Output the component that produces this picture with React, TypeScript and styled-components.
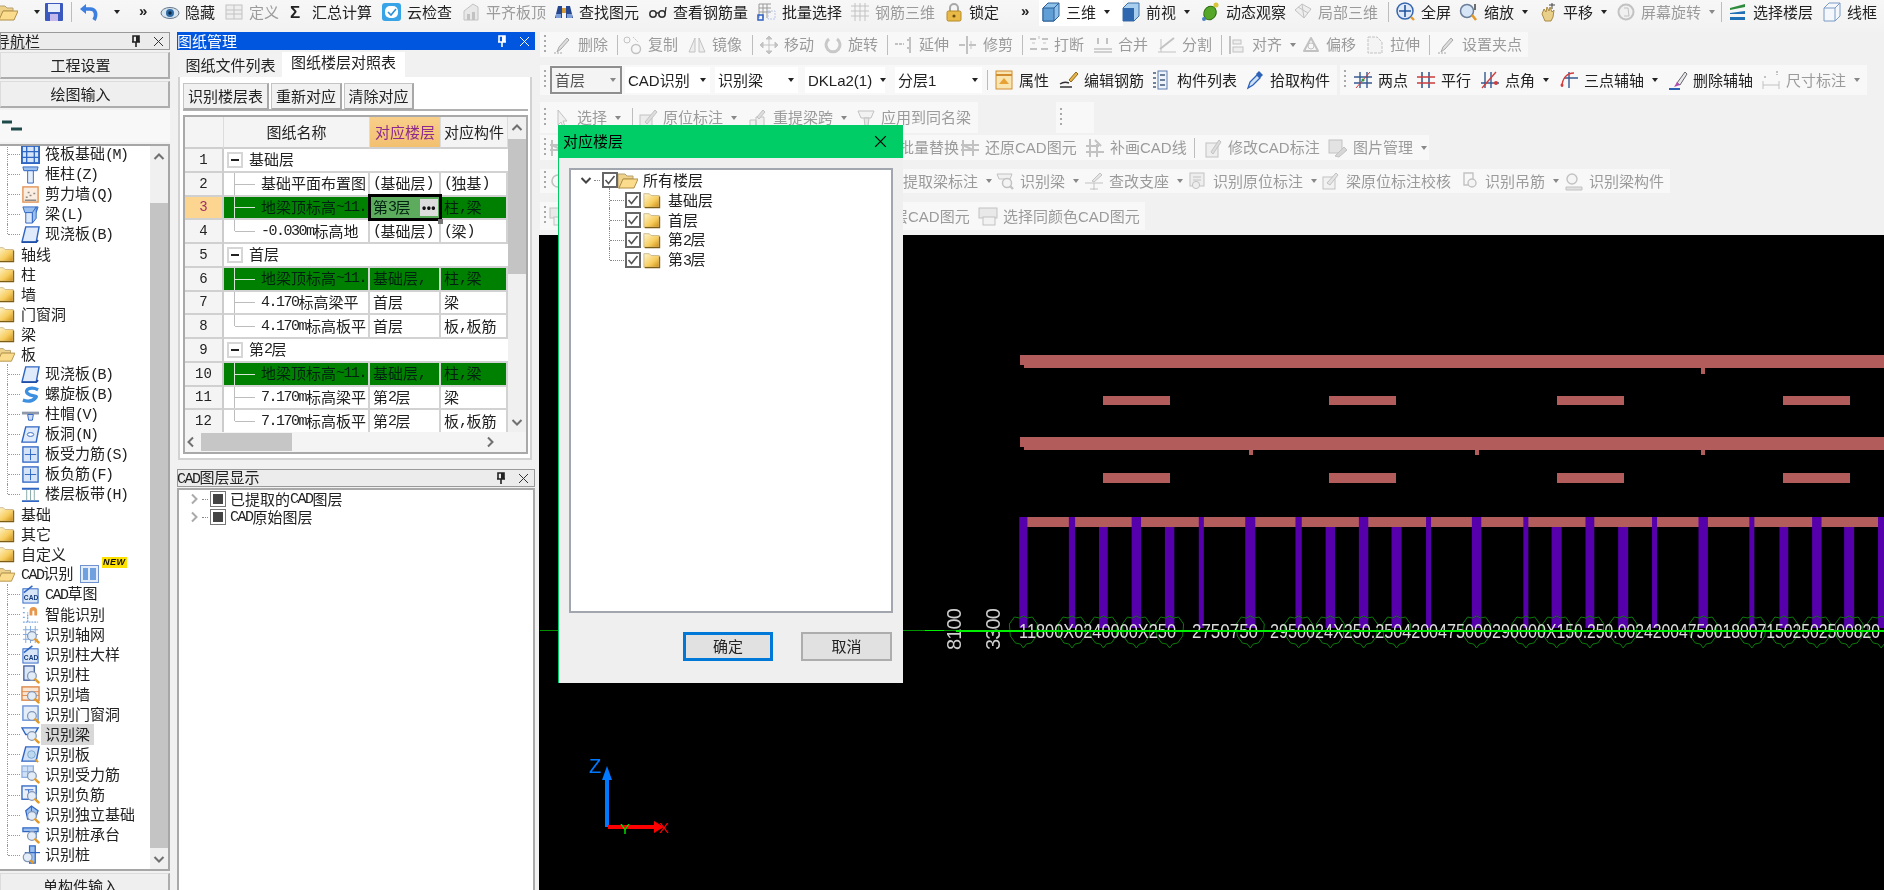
import React from "react";
import styled, { createGlobalStyle } from "styled-components";

const Global = createGlobalStyle`
  html, body { margin: 0; padding: 0; width: 1884px; height: 890px; overflow: hidden; background: #f1f1f1; }
  #root { width: 1884px; height: 890px; }
  * { box-sizing: border-box; }
`;

const CJK = `"Liberation Sans", "Noto Sans CJK SC", sans-serif`;

const Page = styled.div`
  position: relative; width: 1884px; height: 890px; overflow: hidden;
  display: flex; flex-direction: column; background: #f1f1f1;
  font-family: ${CJK}; font-size: 15px; color: #222; line-height: 1;
  filter: blur(0.35px);
`;

/* ---------- icons ---------- */
const g = "#c2c2c2", g2 = "#a8a8a8", b = "#2f66c4", b2 = "#9cc0ee", o = "#e39a26";
const Mag = () => (<><circle cx="11.5" cy="11.5" r="4.6" fill="#e3edf8" stroke="#8497b4" strokeWidth="1.3" /><path d="M15 15l3.4 3.4" stroke={o} strokeWidth="2.6" strokeLinecap="round" /></>);
const grayPen = <><path d="M4 17l2-5 8-9 2 2-8 9z" fill="#ddd" stroke={g2} /><path d="M1 18h8" stroke={g} strokeWidth="1.5" strokeDasharray="2 1" /></>;

const ICONS: Record<string, React.ReactNode> = {
  folderOpen: <><path d="M0 4h7l2 2h6v3H5l-3 9H0z" fill="#efd28a" stroke="#b7a070" /><path d="M5 9h15l-4 9H1z" fill="#fbdc8c" stroke="#b08f45" /></>,
  folder: <><defs><linearGradient id="fg" x1="0" y1="0" x2="1" y2="1"><stop offset="0" stopColor="#fff6cf" /><stop offset="0.6" stopColor="#f7cc5c" /><stop offset="1" stopColor="#c98a12" /></linearGradient></defs><path d="M1 3h6l2 2h9v13H1z" fill="url(#fg)" stroke="#c9b88e" /><path d="M18.5 6v12.5H2" fill="none" stroke="#7c5c12" strokeWidth="1.2" /></>,
  save: <><rect x="1" y="1" width="18" height="18" rx="1" fill="#3b58bf" /><rect x="4" y="2" width="12" height="8" fill="#e9eefb" /><rect x="6" y="12" width="8" height="7" fill="#c4b7ec" /></>,
  undo: <><path d="M15 18c3-5 2-11-4-11H4" fill="none" stroke="#3d7fe0" strokeWidth="3.6" /><path d="M1 7l6-5v10z" fill="#3d7fe0" /></>,
  eye: <><ellipse cx="10" cy="11" rx="9" ry="5.5" fill="#d7e3ee" stroke="#66788c" /><circle cx="10" cy="11" r="4" fill="#2e6ca8" /><circle cx="10" cy="11" r="1.7" fill="#10283f" /></>,
  table: <><rect x="2" y="3" width="16" height="14" fill="#eee" stroke={g} /><path d="M2 8h16M2 12h16M10 3v14" stroke={g} /></>,
  sigma: <text x="3" y="16" fontSize="17" fontWeight="700" fontFamily="Liberation Sans" fill="#222">Σ</text>,
  cloud: <><rect x="0" y="1" width="19" height="18" rx="3" fill="#38a3e6" /><rect x="3" y="4" width="13" height="12" rx="5" fill="#fff" /><path d="M6 10l3 3 5-6" fill="none" stroke="#2b8fd8" strokeWidth="1.6" /></>,
  plate: <><path d="M3 18V9l9-7 5 3v13z" fill="#e8e8e8" stroke={g} /><path d="M6 12h3v6H6zM11 10h3v8h-3z" fill={g} /></>,
  binoculars: <><path d="M1 16l3-12h4v12zM19 16l-3-12h-4v12z" fill="#25478f" /><rect x="8" y="6" width="4" height="5" fill="#d49a3a" /><rect x="2" y="12" width="5" height="4" fill="#7c9ed8" /><rect x="13" y="12" width="5" height="4" fill="#7c9ed8" /></>,
  glasses: <><circle cx="5" cy="12" r="3.2" fill="none" stroke="#333" strokeWidth="1.5" /><circle cx="14" cy="12" r="3.2" fill="none" stroke="#333" strokeWidth="1.5" /><path d="M8 11h3M17 12l1-7" stroke="#333" strokeWidth="1.3" /></>,
  batch: <><path d="M2 2h12M2 6h12M2 10h12M2 2v14M6 2v14M10 2v14" stroke="#999" fill="none" /><rect x="1" y="13" width="5" height="5" fill="none" stroke="#2f5fc4" strokeWidth="1.5" /><rect x="11" y="9" width="7" height="8" fill="none" stroke="#b9c6e8" strokeDasharray="2 1" /></>,
  rebar3d: <path d="M1 4h18M1 9h18M1 14h18M5 1v18M10 1v18M15 1v18" stroke={g} fill="none" />,
  lock: <><path d="M6 9V6a4 4 0 0 1 8 0v3" fill="none" stroke="#a8a8a8" strokeWidth="2" /><rect x="3" y="9" width="14" height="10" rx="1.5" fill="#e9b948" stroke="#b58a26" /><circle cx="10" cy="14" r="1.6" fill="#6b4f10" /></>,
  cube: <><path d="M2 6l5-5h11v13l-5 5H2z" fill="#8ec1ea" stroke="#2b5f96" /><path d="M2 6h11v13H2z" fill="#5f9fd6" stroke="#2b5f96" /><path d="M13 6l5-5" fill="none" stroke="#2b5f96" /></>,
  cube2: <><path d="M2 6l5-5h11v13l-5 5H2z" fill="#a9cfee" stroke="#3d6ea6" /><path d="M2 6h11v13H2z" fill="#2f67ae" /></>,
  orbit: <><ellipse cx="9" cy="11" rx="6" ry="7" transform="rotate(30 9 11)" fill="#55a827" stroke="#2e6d12" /><circle cx="15" cy="3" r="2.5" fill="#d8c436" /><circle cx="3" cy="17" r="2" fill="#4a7fc4" /></>,
  local3d: <><path d="M2 8l7-6 9 5-7 9z" fill="#eee" stroke={g} /><path d="M9 2l2 14M5 5l10 6" stroke={g} /></>,
  full: <><circle cx="9" cy="9" r="8" fill="#dfe9f8" stroke="#3465ad" strokeWidth="1.5" /><path d="M9 3v12M3 9h12" stroke="#24559e" strokeWidth="1.6" /><path d="M15 15l3 3" stroke={o} strokeWidth="2.4" /></>,
  zoom: <><circle cx="8" cy="9" r="6.5" fill="#d7e6f7" stroke="#6b7f9b" strokeWidth="1.5" /><path d="M13 13l4 5" stroke={o} strokeWidth="2.6" /><path d="M16 2v6" stroke="#333" strokeWidth="1.4" /></>,
  hand: <><path d="M4 12l2-5 2 3 1-5 2 4 1-4 2 5 2-2-1 7-2 4H7z" fill="#e8cf8a" stroke="#a98a44" /><path d="M14 1v6M11 3h6" stroke="#444" /></>,
  screenRot: <><circle cx="10" cy="10" r="7.5" fill="#f0f0f0" stroke={g} strokeWidth="2" /><path d="M8 6h4l1 8H8" fill="none" stroke={g} /></>,
  floors: <><path d="M2 6l15-4v3L2 8z" fill="#2e8b3d" /><path d="M2 11l15-2v3H2z" fill="#1f6fb6" /><path d="M2 15h15v3H2z" fill="#1f6fb6" /></>,
  wire: <><path d="M2 6l5-5h11v13l-5 5H2z" fill="#f4f7fb" stroke="#7d9cc4" /><path d="M2 6h11v13M13 6l5-5" fill="none" stroke="#7d9cc4" /></>,
  brush: grayPen,
  copy: <><circle cx="4" cy="5" r="3" fill="none" stroke={g} /><circle cx="13" cy="14" r="4.5" fill="none" stroke={g} strokeWidth="1.5" /><path d="M10 2l5 5" stroke={g} strokeDasharray="2 1" /></>,
  mirror: <><path d="M8 3L2 17h6zM12 3l6 14h-6z" fill="#eee" stroke={g} /></>,
  move: <><path d="M10 1v18M1 10h18M10 1l-3 3h6zM10 19l-3-3h6zM1 10l3-3v6zM19 10l-3-3v6z" stroke={g} fill={g} /></>,
  rotate: <path d="M6 4a7 7 0 1 0 8 0" fill="none" stroke="#c8c8c8" strokeWidth="3" />,
  extend: <><path d="M1 9h9" stroke={g} strokeWidth="2" strokeDasharray="3 1" /><path d="M16 2v16M13 5h3M13 13h3" stroke={g} strokeWidth="2" /></>,
  trim: <><path d="M9 1v18M1 10h6M11 10h7" stroke={g} strokeWidth="2" /><path d="M13 6v8" stroke={g} /></>,
  break: <><path d="M1 4h6M13 4h6M1 14h7M12 14h7" stroke={g} strokeWidth="2" /><path d="M3 8h3M14 8h3M10 1v3" stroke={g} /></>,
  merge: <><path d="M1 14h18M1 17h18" stroke={g} strokeWidth="1.6" /><path d="M5 3v6M14 3v6" stroke={g} strokeWidth="2" /></>,
  split: <><path d="M1 17h18M4 4v13" stroke={g} /><path d="M3 14L17 3" stroke={g} strokeWidth="2" /></>,
  align: <><path d="M3 1v18" stroke={g} strokeWidth="2" /><rect x="6" y="5" width="8" height="4" fill="#eee" stroke={g} /><rect x="6" y="12" width="10" height="5" fill="#eee" stroke={g} /></>,
  offset: <><path d="M3 16l7-13 7 13z" fill="none" stroke={g} strokeWidth="2" strokeLinejoin="round" /><circle cx="10" cy="11" r="3" fill="none" stroke={g} /></>,
  stretch: <path d="M3 2h9l5 5v11H3z" fill="#f4f4f4" stroke={g} strokeDasharray="3 1" />,
  props: <><rect x="2" y="1" width="16" height="18" fill="#f9e5b0" stroke="#d08c2e" /><path d="M2 5h16" stroke="#d08c2e" strokeWidth="2" /><path d="M5 14l5-6 5 6z" fill="#e8a234" /></>,
  pen: <><path d="M10 10l7-8 2 2-7 8z" fill="#e8b447" stroke="#8a6b20" /><path d="M1 14c3-2 6-2 9-1M1 17h12" stroke="#333" strokeWidth="1.5" fill="none" /></>,
  list: <><rect x="6" y="1" width="9" height="18" fill="#eef3fb" stroke="#5a7bb0" /><path d="M1 3h3M1 8h3M1 13h3M1 17h3M8 5h5M8 10h5M8 15h5" stroke="#44597c" strokeWidth="1.6" /></>,
  picker: <><path d="M3 18l2-6 7-7 3 3-7 7z" fill="#cfe2f8" stroke="#2d62b8" strokeWidth="1.3" /><path d="M11 4l3-3 4 4-3 3z" fill="#2d62b8" /></>,
  twopts: <><path d="M7 2v16M14 2v16M1 7h18M1 13h18" stroke="#35598f" strokeWidth="1.4" /><path d="M3 18L17 2" stroke="#d43b3b" /><circle cx="10" cy="10" r="1.6" fill="#3a9a3a" /></>,
  parallel: <><path d="M6 2v16M13 2v16" stroke="#35598f" strokeWidth="1.6" /><path d="M1 7h18M1 13h18" stroke="#c93d3d" strokeWidth="1.6" /></>,
  angle: <><path d="M5 2v16M11 2v16M1 13h18" stroke="#35598f" strokeWidth="1.4" /><path d="M2 18L16 2" stroke="#d43b3b" strokeWidth="1.4" /><circle cx="16" cy="13" r="2" fill="#d43b3b" /></>,
  arc: <><path d="M10 2v16M5 8h14" stroke="#35598f" strokeWidth="1.4" /><path d="M3 17C3 8 8 3 15 3" stroke="#d43b3b" fill="none" strokeWidth="1.4" /><circle cx="3" cy="15" r="1.5" fill="#d43b3b" /></>,
  delaxis: <><path d="M9 13l8-11 2 2-7 11z" fill="#e8e8f0" stroke="#666" /><path d="M6 17l3-5 3 3z" fill="#b34fb0" /><path d="M1 19h11" stroke="#2c60b0" strokeWidth="2" /></>,
  dimension: <><path d="M2 11v8M18 11v8M2 15h16" stroke={g} /><path d="M16 1v4M3 7h2" stroke={g} strokeWidth="2" strokeDasharray="2 1" /></>,
  arrow: <path d="M6 2v15l3-3 2 5 2-1-2-5h4z" fill="#f0f0f0" stroke={g} />,
  annot: <><rect x="2" y="7" width="12" height="12" fill="#ececec" stroke={g} /><path d="M7 14L17 2l2 2L9 16z" fill="#ddd" stroke={g} /></>,
  respan: <><path d="M2 18v-6h6v6zM8 18V9h8v9z" fill="#f0f0f0" stroke={g} /><path d="M9 9l6-7 2 2-6 7z" fill="#ddd" stroke={g} /></>,
  apply: <><path d="M2 3h16l-3 7H5z" fill="#f2f2f2" stroke={g} /><path d="M8 10h5l-1 8H9z" fill="#e6e6e6" stroke={g} /></>,
  restore: <path d="M3 2v16M13 2v16M1 7h18M1 12h18M3 7l10 5" stroke={g} strokeWidth="2" fill="none" />,
  draw: <path d="M5 1v18M12 6v13M1 8h13M1 14h18M10 2l6 6" stroke={g} strokeWidth="2" fill="none" />,
  modify: <><rect x="3" y="5" width="12" height="14" fill="#eee" stroke={g} /><path d="M8 14L16 2l2 2-8 12z" fill="#ddd" stroke={g} /></>,
  image: <><rect x="1" y="2" width="13" height="13" fill="#e3e3e3" stroke={g} /><path d="M7 18l9-9 3 3-8 7z" fill="#d6d6d6" stroke={g} /></>,
  idBeam: <><path d="M2 3h15l-2 5H4z" fill="#f0f0f0" stroke={g} /><circle cx="12" cy="12" r="4.5" fill="#f4f4f4" stroke={g} strokeWidth="1.5" /><path d="M15 15l3 3" stroke={g} strokeWidth="2.4" /></>,
  support: <><path d="M1 12h18M10 12v7M6 18h8" stroke={g} /><path d="M8 10L16 2l2 2-8 7z" fill="#e6e6e6" stroke={g} /></>,
  idAnnot: <><rect x="2" y="2" width="14" height="13" fill="#eee" stroke={g} /><path d="M5 6h8M5 9h8" stroke={g} /><circle cx="8" cy="14" r="3.6" fill="#eee" stroke={g} /></>,
  check: <><rect x="2" y="6" width="12" height="12" fill="#f2f2f2" stroke={g} /><path d="M6 12L15 2l2 2-8 10z" fill="#e4e4e4" stroke={g} /></>,
  stirrup: <><path d="M4 2h9v12H4z" fill="none" stroke={g} strokeWidth="1.4" /><circle cx="12" cy="12" r="4" fill="#f4f4f4" stroke={g} strokeWidth="1.4" /></>,
  member: <><path d="M2 16h16v3H2z" fill="#e0e0e0" stroke={g} /><circle cx="8" cy="8" r="5" fill="#f5f5f5" stroke={g} strokeWidth="1.4" /></>,
  colorCad: <><rect x="1" y="2" width="18" height="10" fill="#e9e9e9" stroke={g} /><rect x="5" y="11" width="12" height="8" fill="#f2f2f2" stroke={g} /></>,
  round: <circle cx="9" cy="10" r="6" fill="none" stroke={g} strokeWidth="1.6" />,
  raft: <><rect x="1" y="1" width="18" height="18" fill="#d5e4f7" stroke={b} strokeWidth="2" /><path d="M1 7h18M1 13h18M6 1v18M14 1v18" stroke={b} strokeWidth="1.4" /></>,
  column: <><path d="M2 2h16l-1 4H3z" fill={b2} stroke={b} /><path d="M7 6h6v13H7z" fill="#e5eefb" stroke={b} /></>,
  shear: <><rect x="2" y="2" width="16" height="16" fill="#fbeee0" stroke="#e09050" strokeWidth="1.4" /><path d="M4 16h12M5 13h2M9 11h2M13 9h2M7 8h2" stroke="#8a8a8a" strokeWidth="1.6" /></>,
  beam: <><path d="M2 2h16l-2 6H4z" fill={b2} stroke={b} /><path d="M5 8h7v11H5z" fill="#dbe8f9" stroke={b} /><path d="M12 8l4-6v12l-4 5z" fill={b2} stroke={b} /></>,
  slab: <><path d="M5 2h14l-3 16H1z" fill="#dfeafa" stroke={b} strokeWidth="1.5" /><path d="M1 18h15l2-2" fill="none" stroke="#1e4da8" strokeWidth="2" /></>,
  spiral: <path d="M18 5C10 1 3 5 7 9s12 1 8 5-10 3-13 2" fill="none" stroke="#3d8fe0" strokeWidth="3.5" />,
  cap: <><path d="M1 7h18v3H1z" fill="#8d99ab" /><path d="M7 10h6l-1 6H8z" fill="#cfdcf0" stroke={b} /></>,
  hole: <><path d="M5 2h14l-3 16H1z" fill="#dfeafa" stroke={b} strokeWidth="1.5" /><ellipse cx="10" cy="10" rx="3.4" ry="2" fill="#fff" stroke={b} /></>,
  gridSlab: <><rect x="2" y="2" width="16" height="16" fill="#d5e4f7" stroke={b} strokeWidth="1.4" /><path d="M4 10h12M10 4v12" stroke={b} /></>,
  band: <><path d="M1 4h18M1 17h18" stroke={b} strokeWidth="2" /><path d="M6 5v11M14 5v11M10 5v11" stroke="#8aa" /></>,
  cadSketch: <><rect x="2" y="4" width="16" height="15" fill="#d8e6f8" stroke={b} /><path d="M3 8L12 1" stroke={b} strokeWidth="1.6" /><text x="3" y="16" fontSize="7" fontWeight="700" fontFamily="Liberation Sans" fill="#123a7a">CAD</text></>,
  smart: <><path d="M2 3h3M2 8h3M2 13h3M2 18h16M7 18V8" stroke="#7aa8e0" strokeWidth="1.4" strokeDasharray="2 1" /><path d="M9 11V6a4 4 0 0 1 8 0v5h-3V6h-2v5z" fill="#e8964a" /></>,
  idGrid: <><path d="M2 5h16M2 10h16M2 15h16M5 1v18M10 1v18M15 1v18" stroke="#7ea6de" /><Mag /></>,
  idColumn: <><rect x="3" y="1" width="11" height="15" fill="#dbe6f7" stroke="#44609f" strokeWidth="1.4" /><Mag /></>,
  idWall: <><rect x="1" y="2" width="18" height="14" fill="#fbe6d3" stroke="#dc8a4e" strokeWidth="1.5" /><path d="M1 7h18M1 11h18" stroke="#dc8a4e" /><Mag /></>,
  idDoor: <><rect x="2" y="1" width="16" height="15" fill="#e4eefb" stroke="#6d95d6" strokeWidth="1.5" /><Mag /></>,
  idBeamB: <><path d="M1 3h17l-4 7H5z" fill="#e4eefb" stroke={b} strokeWidth="1.5" /><Mag /></>,
  idSlab: <><path d="M5 2h14l-3 15H1z" fill="#cfe0f7" stroke={b} strokeWidth="1.5" /><circle cx="11" cy="10" r="4" fill="#bcd9f0" stroke="#7da6cc" /><path d="M15 15l3 3" stroke={o} strokeWidth="2" /></>,
  idRebar: <><rect x="1" y="1" width="12" height="12" fill="#cfe0f7" stroke="#8fb0df" strokeWidth="1.4" /><path d="M7 1v12M1 7h12" stroke="#8fb0df" /><Mag /></>,
  idNeg: <><rect x="1" y="1" width="15" height="14" fill="#eaf1fb" stroke={b} strokeWidth="1.4" /><path d="M4 5h9M8 5v8" stroke={b} /><Mag /></>,
  idFound: <><path d="M5 6l6-5 7 5-3 9H7z" fill={b2} stroke={b} strokeWidth="1.3" /><path d="M11 1v14" stroke={b} /><Mag /></>,
  idPile: <><path d="M2 3h16v4H2z" fill={b2} stroke={b} strokeWidth="1.3" /><path d="M12 7h4v7h-4z" fill="#dbe8f9" stroke={b} /><Mag /></>,
  idPile2: <><path d="M9 1h6v18H9z" fill={b2} stroke={b} strokeWidth="1.3" /><path d="M4 8h16" stroke={b} strokeWidth="1.3" /><circle cx="7" cy="13" r="4.6" fill="#e3edf8" stroke="#8497b4" strokeWidth="1.3" /><path d="M10 16l3 3" stroke={o} strokeWidth="2.6" /></>,
  idCad: <><rect x="2" y="4" width="16" height="15" fill="#d8e6f8" stroke={b} /><path d="M3 8L12 1" stroke={b} strokeWidth="1.6" /><text x="3" y="16" fontSize="7" fontWeight="700" fontFamily="Liberation Sans" fill="#123a7a">CAD</text></>,
};

const IconSvg = styled.svg`flex: none; display: block;`;
const Icon = ({ k, s = 20 }: { k: string; s?: number }) => (
  <IconSvg viewBox="0 0 20 20" width={s} height={s}>{ICONS[k]}</IconSvg>
);

const Mono = styled.span`font-family: "Liberation Mono", monospace; font-size: 1em; letter-spacing: -0.1em;`;
const L = ({ children }: { children: string }) => (
  <>{children.split(/([\x21-\x7e]+)/).map((p, i) => (i % 2 ? <Mono key={i}>{p}</Mono> : p))}</>
);

/* ---------- toolbars ---------- */
const TopBar = styled.div`
  display: flex; align-items: flex-start; height: 32px; flex: none; margin-left: -2px; width: 1886px;
  background: linear-gradient(#f7f7f7, #f2f2f2);
`;
const ToolItem = styled.div<{ $w: number; $dim?: boolean; $active?: boolean }>`
  display: flex; align-items: center; height: 24px; flex: none; width: ${(p) => p.$w}px;
  white-space: nowrap; color: ${(p) => (p.$dim ? "#9b9b9b" : "#222")};
  ${(p) => p.$active && "background:#fff; outline: 2px solid #fff;"}
  & > span.t { margin-left: 5px; }
`;
const Caret = styled.i<{ $dim?: boolean }>`
  margin-left: 8px; width: 0; height: 0; flex: none;
  border-left: 3.5px solid transparent; border-right: 3.5px solid transparent;
  border-top: 4px solid ${(p) => (p.$dim ? "#888" : "#222")};
`;
const Sep = styled.div<{ $w: number }>`
  flex: none; height: 24px; width: ${(p) => p.$w}px; display: flex; align-items: center;
  &::before { content: ""; width: 1px; height: 20px; background: #bdbdbd; }
`;
const Sp = styled.div<{ $w: number; $h?: number }>`flex: none; width: ${(p) => p.$w}px; ${(p) => p.$h ? `height:${p.$h}px;` : ""}`;
const More = styled.span`font-size: 15px; font-weight: 700; margin-top: -3px;`;

type T = [string, string, number, string?];
const Tools = ({ items, from, end }: { items: T[]; from: number; end: number }) => (
  <>
    <Sp $w={items[0][2] - from} />
    {items.map((it, i) => {
      const w = (items[i + 1]?.[2] ?? end) - it[2];
      const f = it[3] || "";
      if (it[0] === "|") return <Sep key={i} $w={w} />;
      if (it[0] === ">>") return <ToolItem key={i} $w={w}><More>»</More></ToolItem>;
      const dim = f.includes("d");
      return (
        <ToolItem key={i} $w={w} $dim={dim} $active={f.includes("a")}>
          {it[0] && <Icon k={it[0]} />}
          {it[1] && <span className="t">{it[1]}</span>}
          {f.includes("c") && <Caret $dim={dim} />}
        </ToolItem>
      );
    })}
  </>
);

const top: T[] = [
  ["folderOpen", "", -2], ["", "", 26, "c"], ["save", "", 44], ["|", "", 71], ["undo", "", 79], ["", "", 106, "c"], [">>", "", 139],
  ["eye", "隐藏", 160], ["table", "定义", 224, "d"], ["sigma", "汇总计算", 287], ["cloud", "云检查", 382], ["plate", "平齐板顶", 461, "d"],
  ["binoculars", "查找图元", 554], ["glasses", "查看钢筋量", 648], ["batch", "批量选择", 757], ["rebar3d", "钢筋三维", 850, "d"], ["lock", "锁定", 944],
  [">>", "", 1021], ["cube", "三维", 1041, "ac"], ["cube2", "前视", 1121, "c"], ["orbit", "动态观察", 1201], ["local3d", "局部三维", 1293, "d"],
  ["|", "", 1388], ["full", "全屏", 1396], ["zoom", "缩放", 1459, "c"], ["hand", "平移", 1538, "c"], ["screenRot", "屏幕旋转", 1616, "dc"],
  ["|", "", 1721], ["floors", "选择楼层", 1728], ["wire", "线框", 1822],
];
const r2: T[] = [
  ["brush", "删除", 553, "d"], ["|", "", 617], ["copy", "复制", 623, "d"], ["mirror", "镜像", 687, "d"], ["|", "", 752], ["move", "移动", 759, "d"], ["rotate", "旋转", 823, "d"], ["|", "", 887],
  ["extend", "延伸", 894, "d"], ["trim", "修剪", 958, "d"], ["|", "", 1022], ["break", "打断", 1029, "d"], ["merge", "合并", 1093, "d"], ["split", "分割", 1157, "d"], ["|", "", 1221],
  ["align", "对齐", 1227, "dc"], ["offset", "偏移", 1301, "d"], ["stretch", "拉伸", 1365, "d"], ["|", "", 1429], ["brush", "设置夹点", 1437, "d"],
];
const r3a: T[] = [["props", "属性", 995], ["pen", "编辑钢筋", 1060], ["list", "构件列表", 1153], ["picker", "拾取构件", 1246]];
const r3b: T[] = [
  ["twopts", "两点", 1353], ["parallel", "平行", 1416], ["angle", "点角", 1480, "c"], ["arc", "三点辅轴", 1559, "c"], ["delaxis", "删除辅轴", 1668], ["dimension", "尺寸标注", 1761, "dc"],
];
const r4: T[] = [["arrow", "选择", 552, "dc"], ["|", "", 632], ["annot", "原位标注", 638, "dc"], ["respan", "重提梁跨", 748, "dc"], ["apply", "应用到同名梁", 856, "d"]];
const r5: T[] = [["restore", "", 549, "d"], ["restore", "批量替换", 874, "d"], ["restore", "还原CAD图元", 960, "d"], ["draw", "补画CAD线", 1085, "d"], ["|", "", 1194], ["modify", "修改CAD标注", 1203, "d"], ["image", "图片管理", 1328, "dc"]];
const r6: T[] = [["round", "", 549, "d"], ["member", "提取梁标注", 878, "dc"], ["idBeam", "识别梁", 995, "dc"], ["support", "查改支座", 1084, "dc"], ["idAnnot", "识别原位标注", 1188, "dc"], ["check", "梁原位标注校核", 1321, "d"], ["stirrup", "识别吊筋", 1460, "dc"], ["member", "识别梁构件", 1564, "d"]];
const r7: T[] = [["colorCad", "", 549, "d"], ["colorCad", "选择同图层CAD图元", 808, "d"], ["colorCad", "选择同颜色CAD图元", 978, "d"]];

const Workspace = styled.div`flex: 1; min-width: 0; display: flex; flex-direction: column; margin-left: 4px; height: 858px;`;
const ToolRow = styled.div<{ $h: number; $mt: number }>`
  display: flex; flex: none; height: ${(p) => p.$h}px; margin-top: ${(p) => p.$mt}px; padding-left: 1px;
`;
const Strip = styled.div<{ $w: number; $ml?: number }>`
  display: flex; align-items: center; width: ${(p) => p.$w}px; margin-left: ${(p) => p.$ml || 0}px; flex: none;
  background: #f8f8f8; overflow: hidden;
`;
const Grip = styled.i`
  flex: none; width: 2px; height: 20px; margin: 0 2px 0 4px;
  background: repeating-linear-gradient(#a9a9a9 0 2px, transparent 2px 5px);
`;
const ComboBox = styled.div<{ $w: number; $ml: number; $b?: boolean }>`
  flex: none; display: flex; align-items: center; justify-content: space-between;
  width: ${(p) => p.$w}px; margin-left: ${(p) => p.$ml}px; height: ${(p) => (p.$b ? 28 : 26)}px;
  padding: 0 3px 0 3px; background: #fff;
  ${(p) => p.$b && "border: 2px solid #8e8e8e; background:#f4f4f4; color:#555;"}
  & i { margin-right: 1px; }
`;
const Combo = ({ t, w, ml, bd }: { t: string; w: number; ml: number; bd?: boolean }) => (
  <ComboBox $w={w} $ml={ml} $b={bd}><span>{t}</span><Caret $dim={bd} /></ComboBox>
);
const VRule = styled.div`flex: none; width: 1px; height: 20px; background: #bbb; margin-left: 5px;`;

/* ---------- nav ---------- */
const Main = styled.div`display: flex; flex: 1; min-height: 0;`;
const Nav = styled.div`width: 170px; flex: none; display: flex; flex-direction: column; height: 858px;`;
const TitleBar = styled.div<{ $blue?: boolean }>`
  flex: none; height: 18px; display: flex; align-items: center; overflow: hidden; white-space: nowrap;
  background: ${(p) => (p.$blue ? "#0056df" : "#ececec")}; color: ${(p) => (p.$blue ? "#fff" : "#222")};
  ${(p) => !p.$blue && "border: 1px solid #9a9a9a;"}
`;
const TitleText = styled.span<{ $off?: number }>`flex: 1; margin-left: ${(p) => p.$off || 0}px; font-size: 15px;`;
const PinSvg = styled.svg`flex: none; margin-right: 12px;`;
const Pin = ({ c }: { c: string }) => (
  <PinSvg width="10" height="12" viewBox="0 0 10 12"><path d="M2 1h6v6H2zM1 7h8M5 7v5" fill="none" stroke={c} strokeWidth="1.6" /><path d="M5 1h3v6H5z" fill={c} /></PinSvg>
);
const CloseSvg = styled.svg`flex: none; margin-right: 5px;`;
const Close = ({ c, s = 11 }: { c: string; s?: number }) => (
  <CloseSvg width={s} height={s} viewBox="0 0 11 11"><path d="M1 1l9 9M10 1l-9 9" stroke={c} strokeWidth="1" /></CloseSvg>
);
const NavButton = styled.div<{ $mt?: number }>`
  flex: none; height: 27px; margin-top: ${(p) => p.$mt ?? 2}px; display: flex; align-items: center; justify-content: center; padding-right: 8px;
  background: #efefef; border: 1px solid #dcdcdc; border-bottom: 2px solid #adadad; border-right: 2px solid #adadad;
`;
const NavTools = styled.div`
  flex: none; height: 32px; margin-top: 2px; background: #f8f8f8; display: flex; align-items: center; padding-left: 2px;
`;
const NavTree = styled.div`
  flex: none; height: 727px; margin-top: 2px; display: flex; background: #fff;
  border: 2px solid #a6a6a6; border-left: 0; overflow: hidden;
`;
const TreeList = styled.div`flex: 1; min-width: 0; margin-top: -2px; overflow: hidden;`;
const NavRow = styled.div<{ $child?: boolean; $last?: boolean; $sel?: boolean }>`
  position: relative; height: 20.03px; display: flex; align-items: center; white-space: nowrap;
  padding-left: ${(p) => (p.$child ? 21 : 0)}px;
  ${(p) => p.$child && `
    &::before { content: ""; position: absolute; left: 7px; top: 0; height: ${p.$last ? "50%" : "100%"}; border-left: 1px dotted #999; }
    &::after { content: ""; position: absolute; left: 8px; top: 50%; width: 12px; border-top: 1px dotted #999; }
  `}
`;
const NavLabel = styled.span<{ $sel?: boolean }>`
  margin-left: 5px; ${(p) => p.$sel && "background:#d8d8d8; padding: 3px 4px 3px 4px; margin-left:1px;"}
`;
const FolderName = styled.span`margin-left: 6px;`;
const NewBadge = styled.span`
  position: absolute; left: 102px; top: -7px; padding: 1px 1px; font: italic 700 9px/9px "Liberation Sans", sans-serif;
  background: #ffe100; color: #111; letter-spacing: 0.5px;
`;
const NewIcon = styled.span`
  display: inline-flex; gap: 2px; margin-left: 6px; width: 19px; height: 18px; padding: 2px; border: 1px solid #6f93cf; background: #e4edf9;
  & > b { flex: 1; background: #6fa0e0; }
`;

const ScrollCol = styled.div`
  flex: none; width: 18px; display: flex; flex-direction: column; align-items: center; background: #f0f0f0;
`;
const ArrowBox = styled.div<{ $h: number; $end?: boolean }>`
  flex: none; height: ${(p) => p.$h}px; display: flex; justify-content: center;
  align-items: ${(p) => (p.$end ? "flex-end" : "center")}; ${(p) => p.$end && "padding-bottom: 4px;"}
`;
const Thumb = styled.div<{ $mt: number; $h: number }>`flex: none; width: 100%; margin-top: ${(p) => p.$mt}px; height: ${(p) => p.$h}px; background: #c4c4c4;`;
const ChevSvg = styled.svg`flex: none; display: block;`;
const Chev = ({ d, c = "#707070" }: { d: "u" | "d" | "l" | "r"; c?: string }) => (
  <ChevSvg width="12" height="12" viewBox="0 0 12 12" style={{ transform: `rotate(${{ d: 0, u: 180, l: 90, r: -90 }[d]}deg)` }}>
    <path d="M1.5 4l4.5 4.5L10.5 4" fill="none" stroke={c} strokeWidth="2" />
  </ChevSvg>
);

const FolderIcon = () => <Icon k="folder" s={18} />;
const NavLead = styled.div`margin-left: -3px; display: flex; flex: none;`;

type N = { f?: string; open?: boolean; i?: string; t?: string; last?: boolean; sel?: boolean; cad?: boolean };
const navRows: N[] = [
  { i: "raft", t: "筏板基础(M)" }, { i: "column", t: "框柱(Z)" }, { i: "shear", t: "剪力墙(Q)" }, { i: "beam", t: "梁(L)" }, { i: "slab", t: "现浇板(B)", last: true },
  { f: "轴线" }, { f: "柱" }, { f: "墙" }, { f: "门窗洞" }, { f: "梁" }, { f: "板", open: true },
  { i: "slab", t: "现浇板(B)" }, { i: "spiral", t: "螺旋板(B)" }, { i: "cap", t: "柱帽(V)" }, { i: "hole", t: "板洞(N)" }, { i: "gridSlab", t: "板受力筋(S)" }, { i: "gridSlab", t: "板负筋(F)" }, { i: "band", t: "楼层板带(H)", last: true },
  { f: "基础" }, { f: "其它" }, { f: "自定义" }, { f: "CAD识别", open: true, cad: true },
  { i: "cadSketch", t: "CAD草图" }, { i: "smart", t: "智能识别" }, { i: "idGrid", t: "识别轴网" }, { i: "idCad", t: "识别柱大样" }, { i: "idColumn", t: "识别柱" }, { i: "idWall", t: "识别墙" }, { i: "idDoor", t: "识别门窗洞" },
  { i: "idBeamB", t: "识别梁", sel: true }, { i: "idSlab", t: "识别板" }, { i: "idRebar", t: "识别受力筋" }, { i: "idNeg", t: "识别负筋" }, { i: "idFound", t: "识别独立基础" }, { i: "idPile", t: "识别桩承台" }, { i: "idPile2", t: "识别桩", last: true },
];

/* ---------- drawing panel ---------- */
const Panel = styled.div`width: 358px; flex: none; margin-left: 7px; display: flex; flex-direction: column; height: 858px;`;
const Tabs = styled.div`flex: none; height: 25px; margin-top: 2px; display: flex; align-items: flex-end; padding-left: 2px;`;
const Tab = styled.div<{ $on?: boolean; $w: number }>`
  width: ${(p) => p.$w}px; height: ${(p) => (p.$on ? 25 : 23)}px; display: flex; align-items: center; justify-content: center;
  background: ${(p) => (p.$on ? "#fff" : "#f2f2f2")}; ${(p) => (p.$on ? "padding-bottom:4px;" : "")}
`;
const TabBody = styled.div`
  flex: none; height: 383px; width: 354px; margin-left: 1px; background: #fff; border: 2px solid #d2d2d2; border-top: 0; padding: 6px 2px 0 3px;
`;
const BtnRow = styled.div`display: flex; gap: 2px; height: 28px; border-bottom: 2px solid #b0b0b0;`;
const SmallBtn = styled.div<{ $w: number }>`
  width: ${(p) => p.$w}px; height: 27px; display: flex; align-items: center; justify-content: center;
  background: #f1f1f1; border: 1px solid #c4c4c4; border-bottom: 2px solid #a8a8a8; border-right: 2px solid #a8a8a8;
`;
const GridBox = styled.div`
  margin-top: 4px; width: 345px; height: 339px; border: 2px solid #a9a9a9; background: #fff; display: flex; flex-wrap: wrap; align-content: flex-start;
`;
const GridMain = styled.div`width: 323px; height: 315px; overflow: hidden; flex: none;`;
const COLS = "39px 146px 71px 67px";
const HeadRow = styled.div`display: grid; grid-template-columns: ${COLS}; height: 32px;`;
const HeadCell = styled.div<{ $on?: boolean }>`
  display: flex; align-items: center; justify-content: center; white-space: nowrap;
  background: ${(p) => (p.$on ? "linear-gradient(#f8cf8a,#f3c070)" : "#f4f4f4")}; color: ${(p) => (p.$on ? "#8c2a8e" : "#222")};
  border-right: 1px solid #dcdcdc; border-bottom: 2px solid #cfcfcf;
`;
const DataRow = styled.div`display: grid; grid-template-columns: ${COLS}; height: 23.75px;`;
const NumCell = styled.div<{ $on?: boolean }>`
  display: flex; align-items: center; justify-content: center; border-right: 2px solid #ccc; border-bottom: 2px solid #d0d0d0;
  background: ${(p) => (p.$on ? "#fcd591" : "#f4f4f4")}; color: ${(p) => (p.$on ? "#a03060" : "#222")};
  font-family: "Liberation Mono", monospace; font-size: 14px;
`;
const Cell = styled.div<{ $green?: boolean; $pad?: number }>`
  position: relative; display: flex; align-items: center; white-space: pre; overflow: hidden;
  padding-left: ${(p) => p.$pad ?? 3}px;
  background: ${(p) => (p.$green ? "#008000" : "#fff")}; color: ${(p) => (p.$green ? "#021" : "#222")};
  border-right: 2px solid #d2d2d2; border-bottom: 2px solid #d2d2d2;
`;
const NameCell = styled(Cell)<{ $b?: string }>`
  padding-left: 37px;
  &::before { content: ""; position: absolute; left: 10px; top: 0; width: 1px; height: ${(p) => (p.$b === "last" ? "50%" : "110%")}; background: ${(p) => (p.$green ? "#d6e6d6" : "#bdbdbd")}; }
  &::after { content: ""; position: absolute; left: 11px; top: 50%; width: 20px; height: 1px; background: ${(p) => (p.$green ? "#d6e6d6" : "#bdbdbd")}; }
`;
const SecCell = styled.div`
  grid-column: 2 / 5; display: flex; align-items: center; padding-left: 3px; background: #fff; border-bottom: 2px solid #d2d2d2;
`;
const MinusBox = styled.span`
  width: 16px; height: 16px; border: 2px solid #d6d6d6; display: flex; align-items: center; justify-content: center; margin-right: 6px; flex: none;
  &::after { content: ""; width: 8px; height: 1.5px; background: #222; }
`;
const SelFrame = styled.div`
  position: absolute; left: 0; top: 0; z-index: 3; width: 74px; height: 27px; border: 3px solid #000; background: #5dab5d;
  display: flex; align-items: center; padding-left: 2px; color: #021;
`;
const EllipsisBtn = styled.span`
  position: absolute; right: 1px; top: 2px; width: 18px; height: 17px; background: #ddd; color: #111; font-size: 12px; font-weight: 700;
  display: flex; align-items: center; justify-content: center; letter-spacing: 0.5px; line-height: 8px;
`;
const HScroll = styled.div`flex: none; width: 341px; height: 20px; display: flex; align-items: center; background: #f4f4f4;`;
const HThumb = styled.div`width: 91px; height: 18px; background: #c6c6c6; margin-left: 4px;`;
const CadBody = styled.div`
  flex: none; height: 403px; margin-top: 1px; background: #fff; border: 2px solid #a9a9a9; border-bottom: 0; padding: 0 0 0 9px;
`;
const CadRow = styled.div`display: flex; align-items: center; height: 18px;`;
const LayerBox = styled.span`
  width: 16px; height: 16px; border: 1px solid #777; display: flex; align-items: center; justify-content: center; margin-right: 4px; flex: none;
  &::after { content: ""; width: 10px; height: 10px; background: #444; }
`;

/* ---------- canvas ---------- */
const Canvas = styled.div`flex: 1; min-height: 0; margin-top: 5px; background: #000; margin-right: -1px;`;
const CanvasSvg = styled.svg`display: block;`;

const X = (p: number) => 900 + p / 1.593;
const cols: [number, number, boolean][] = [
  [190, 203, true], [269, 279, true], [317, 331, false], [369, 384, true], [422, 437, false], [476, 484, true], [550, 566, true],
  [630, 640, true], [678, 693, false], [731, 746, true], [783, 799, false], [838, 846, true], [911, 926, true], [993, 1001, true],
  [1038, 1054, false], [1092, 1106, true], [1144, 1160, false], [1198, 1206, true], [1272, 1287, true], [1353, 1361, true],
  [1401, 1415, false], [1453, 1468, true], [1504, 1520, false], [1558, 1568, true],
];
const shield = "M-14,-7 L-9,-14 L-4,-13 L0,-15 L4,-13 L9,-14 L14,-7 L13,5 L8,12 L3,13 L0,17 L-3,13 L-8,12 L-13,5 Z";
const Drawing = () => (
  <CanvasSvg width="1345" height="655" viewBox="539 235 1345 655">
    <g fill="#b35c5c">
      <path d="M1020 355H1884V368H1024V365H1020Z" />
      <path d="M1020 437H1884V450H1024V447H1020Z" />
      <rect x="1020" y="517" width="864" height="10" />
      <rect x="1701" y="368" width="4" height="6" />
      {[1249, 1475, 1701].map((x) => <rect key={x} x={x} y="450" width="4" height="5" />)}
      {[1103, 1329, 1557, 1783].map((x) => <rect key={x} x={x} y="396" width="67" height="9" />)}
      {[1103, 1329, 1557, 1783].map((x) => <rect key={x} x={x} y="473" width="67" height="10" />)}
    </g>
    {cols.map(([a, e, t]) => <rect key={a} x={X(a)} y={t ? 517 : 527} width={X(e) - X(a)} height={t ? 111 : 101} fill="#5500aa" />)}
    <g fill="none" stroke="#0b7a0b" strokeWidth="1">
      {cols.filter(([a]) => a !== 476 && a !== 838 && a !== 1198).map(([a, e]) => <path key={a} d={shield} transform={`translate(${(X(a) + X(e)) / 2},631)`} />)}
    </g>
    <g fill="#dcdcdc" fontFamily="Liberation Sans, sans-serif" fontSize="21">
      <text x="1019" y="638" textLength="157" lengthAdjust="spacingAndGlyphs">11800X0240000X250</text>
      <text x="1192" y="638" textLength="66" lengthAdjust="spacingAndGlyphs">2750750</text>
      <text x="1270" y="638" textLength="276" lengthAdjust="spacingAndGlyphs">2950024X250.2504200475000290000</text>
      <text x="1546" y="638" textLength="334" lengthAdjust="spacingAndGlyphs">X150.250.002420047500180071502502500820</text>
      <text transform="translate(961,650) rotate(-90)" fontSize="20" textLength="42" lengthAdjust="spacing" fill="#cfcfcf">8100</text>
      <text transform="translate(1000,650) rotate(-90)" fontSize="20" textLength="42" lengthAdjust="spacing" fill="#cfcfcf">3300</text>
    </g>
    <rect x="540" y="630" width="1344" height="1" fill="#009000" />
    <rect x="925" y="630" width="19" height="1" fill="#00ee00" />
    <rect x="956" y="630" width="928" height="2" fill="#00ee00" />
    <g>
      <rect x="605" y="780" width="4" height="47" fill="#0078ff" />
      <path d="M607 766l5 14h-10z" fill="#0078ff" />
      <text x="589" y="773" fontSize="20" fill="#0078ff" fontFamily="Liberation Sans, sans-serif">Z</text>
      <rect x="608" y="825" width="48" height="4" fill="#ff0000" />
      <path d="M654 821l10 6-10 6z" fill="#ff0000" />
      <text x="659" y="833" fontSize="15" fill="#ff0000" fontFamily="Liberation Sans, sans-serif">X</text>
      <text x="620" y="834" fontSize="15" fill="#00e000" fontFamily="Liberation Sans, sans-serif">Y</text>
    </g>
  </CanvasSvg>
);

/* ---------- dialog ---------- */
const Dialog = styled.div`
  position: absolute; left: 558px; top: 125px; width: 345px; height: 558px; background: #efefef;
  border-left: 1px solid #00cc66; display: flex; flex-direction: column; z-index: 10;
`;
const DialogTitle = styled.div`
  flex: none; height: 33px; background: #00cd66; display: flex; align-items: center; padding: 0 11px 0 4px; color: #000; justify-content: space-between;
`;
const DialogTree = styled.div`
  flex: none; margin: 10px 0 0 10px; width: 324px; height: 445px; background: #fff; border: 2px solid #a2a6ae; position: relative;
`;
const DRow = styled.div<{ $child?: boolean; $last?: boolean }>`
  position: relative; height: 20px; display: flex; align-items: center; white-space: nowrap; padding-left: ${(p) => (p.$child ? 54 : 9)}px;
  ${(p) => p.$child && `
    &::before { content: ""; position: absolute; left: 38px; top: -2px; height: ${p.$last ? "12px" : "22px"}; border-left: 1px dotted #888; }
    &::after { content: ""; position: absolute; left: 39px; top: 50%; width: 14px; border-top: 1px dotted #888; }
  `}
`;
const CheckBox = styled.span`
  flex: none; width: 16px; height: 16px; border: 2px solid #666; background: #fff;
  display: flex; align-items: center; justify-content: center;
`;
const Chk = () => (<CheckBox><svg width="12" height="12" viewBox="0 0 12 12"><path d="M1.5 6l3 3.5L10.5 2" fill="none" stroke="#555" strokeWidth="1.6" /></svg></CheckBox>);
const DLabel = styled.span<{ $ml: number }>`margin-left: ${(p) => p.$ml}px;`;
const DialogBtns = styled.div`flex: none; display: flex; justify-content: flex-end; gap: 28px; margin-top: 19px; padding-right: 11px;`;
const DialogBtn = styled.div<{ $on?: boolean }>`
  width: ${(p) => (p.$on ? 90 : 91)}px; height: 29px; display: flex; align-items: center; justify-content: center; background: #e1e1e1;
  border: ${(p) => (p.$on ? "3px solid #0078d7" : "2px solid #adadad")};
`;
const DotDash = styled.i`flex:none; width: 6px; margin: 0 2px; border-top: 1px dotted #888;`;
const Open = () => <Icon k="folderOpen" s={20} />;

/* ---------- grid data ---------- */
type R = { n: number; sec?: string; name?: string; f?: string; c?: string; g?: boolean; b?: string; sel?: boolean };
const rows: R[] = [
  { n: 1, sec: "基础层" },
  { n: 2, name: "基础平面布置图", f: "(基础层)", c: "(独基)", b: "mid" },
  { n: 3, name: "地梁顶标高~11.", f: "第3层", c: "柱,梁", g: true, b: "mid", sel: true },
  { n: 4, name: "-0.030m标高地", f: "(基础层)", c: "(梁)", b: "last" },
  { n: 5, sec: "首层" },
  { n: 6, name: "地梁顶标高~11.", f: "基础层,", c: "柱,梁", g: true, b: "mid" },
  { n: 7, name: "4.170标高梁平", f: "首层", c: "梁", b: "mid" },
  { n: 8, name: "4.170m标高板平", f: "首层", c: "板,板筋", b: "last" },
  { n: 9, sec: "第2层" },
  { n: 10, name: "地梁顶标高~11.", f: "基础层,", c: "柱,梁", g: true, b: "mid" },
  { n: 11, name: "7.170m标高梁平", f: "第2层", c: "梁", b: "mid" },
  { n: 12, name: "7.170m标高板平", f: "第2层", c: "板,板筋", b: "last" },
];

const SelOverlay = styled.div`position: absolute; left: 368px; top: 194px; width: 74px; height: 27px; z-index: 5;`;
const SelDot = styled.i`position: absolute; right: -1px; bottom: -3px; width: 5px; height: 5px; background: #777; z-index: 6;`;

export default function App() {
  return (
    <Page>
      <Global />
      <TopBar><Tools items={top} from={-2} end={1884} /></TopBar>
      <Main>
        <Nav>
          <TitleBar>
            <TitleText $off={-6}>导航栏</TitleText>
            <Pin c="#222" /><Close c="#333" />
          </TitleBar>
          <NavButton>工程设置</NavButton>
          <NavButton>绘图输入</NavButton>
          <NavTools>
            <svg width="22" height="14" viewBox="0 0 22 14"><path d="M0 3h10" stroke="#1f4a4a" strokeWidth="3" /><path d="M9 10h11" stroke="#1f4a4a" strokeWidth="3" /></svg>
          </NavTools>
          <NavTree>
            <TreeList>
              {navRows.map((r, i) => r.f ? (
                <NavRow key={i}>
                  <NavLead>{r.open ? <Icon k="folderOpen" s={18} /> : <FolderIcon />}</NavLead>
                  <FolderName><L>{r.f}</L></FolderName>
                  {r.cad && <><NewIcon><b /><b /></NewIcon><NewBadge>NEW</NewBadge></>}
                </NavRow>
              ) : (
                <NavRow key={i} $child $last={r.last}>
                  <Icon k={r.i!} s={19} />
                  <NavLabel $sel={r.sel}><L>{r.t!}</L></NavLabel>
                </NavRow>
              ))}
            </TreeList>
            <ScrollCol>
              <ArrowBox $h={22}><Chev d="u" /></ArrowBox>
              <Thumb $mt={35} $h={645} />
              <ArrowBox $h={22}><Chev d="d" /></ArrowBox>
            </ScrollCol>
          </NavTree>
          <NavButton $mt={2}>单构件输入</NavButton>
        </Nav>

        <Panel>
          <TitleBar $blue>
            <TitleText>图纸管理</TitleText>
            <Pin c="#fff" /><Close c="#fff" />
          </TitleBar>
          <Tabs>
            <Tab $w={103}>图纸文件列表</Tab>
            <Tab $w={123} $on>图纸楼层对照表</Tab>
          </Tabs>
          <TabBody>
            <BtnRow>
              <SmallBtn $w={86}>识别楼层表</SmallBtn>
              <SmallBtn $w={71}>重新对应</SmallBtn>
              <SmallBtn $w={70}>清除对应</SmallBtn>
            </BtnRow>
            <GridBox>
              <GridMain>
                <HeadRow>
                  <HeadCell />
                  <HeadCell>图纸名称</HeadCell>
                  <HeadCell $on>对应楼层</HeadCell>
                  <HeadCell>对应构件</HeadCell>
                </HeadRow>
                {rows.map((r) => (
                  <DataRow key={r.n}>
                    <NumCell $on={r.sel}>{r.n}</NumCell>
                    {r.sec ? (
                      <SecCell><MinusBox /><L>{r.sec}</L></SecCell>
                    ) : (
                      <>
                        <NameCell $green={r.g} $b={r.b}><L>{r.name!}</L></NameCell>
                        <Cell $green={r.g}>
                          {r.sel ? null : <L>{r.f!}</L>}
                        </Cell>
                        <Cell $green={r.g}><L>{r.c!}</L></Cell>
                      </>
                    )}
                  </DataRow>
                ))}
              </GridMain>
              <ScrollCol>
                <ArrowBox $h={22}><Chev d="u" /></ArrowBox>
                <Thumb $mt={0} $h={135} />
                <ArrowBox $h={158} $end><Chev d="d" /></ArrowBox>
              </ScrollCol>
              <HScroll>
                <ArrowBox $h={20}><Chev d="l" /></ArrowBox>
                <HThumb />
                <Sp $w={192} />
                <ArrowBox $h={20}><Chev d="r" /></ArrowBox>
              </HScroll>
            </GridBox>
          </TabBody>
          <Sp $w={1} $h={9} />
          <TitleBar>
            <TitleText $off={-1}><L>CAD图层显示</L></TitleText>
            <Pin c="#222" /><Close c="#333" />
          </TitleBar>
          <CadBody>
            <CadRow><Chev d="r" c="#aaa" /><DotDash /><LayerBox /><L>已提取的CAD图层</L></CadRow>
            <CadRow><Chev d="r" c="#aaa" /><DotDash /><LayerBox /><L>CAD原始图层</L></CadRow>
          </CadBody>
        </Panel>

        <Workspace>
          <ToolRow $h={25} $mt={0}>
            <Strip $w={988}>
              <Grip />
              <Tools items={r2} from={548} end={1527} />
            </Strip>
          </ToolRow>
          <ToolRow $h={30} $mt={8}>
            <Strip $w={797}>
              <Grip />
              <Combo t="首层" w={72} ml={2} bd />
              <Combo t="CAD识别" w={85} ml={3} />
              <Combo t="识别梁" w={83} ml={5} />
              <Combo t="DKLa2(1)" w={80} ml={7} />
              <Combo t="分层1" w={87} ml={10} />
              <VRule />
              <Tools items={r3a} from={989} end={1337} />
            </Strip>
            <Strip $w={527} $ml={3}>
              <Grip />
              <Tools items={r3b} from={1348} end={1867} />
            </Strip>
          </ToolRow>
          <ToolRow $h={31} $mt={7}>
            <Strip $w={438}>
              <Grip />
              <Tools items={r4} from={548} end={978} />
            </Strip>
            <Strip $w={38} $ml={78}><Grip /></Strip>
          </ToolRow>
          <ToolRow $h={25} $mt={2}>
            <Strip $w={889}>
              <Grip />
              <Tools items={r5} from={548} end={1429} />
            </Strip>
          </ToolRow>
          <ToolRow $h={24} $mt={9}>
            <Strip $w={1130}>
              <Grip />
              <Tools items={r6} from={548} end={1670} />
            </Strip>
          </ToolRow>
          <ToolRow $h={28} $mt={9}>
            <Strip $w={605}>
              <Grip />
              <Tools items={r7} from={548} end={1145} />
            </Strip>
          </ToolRow>
          <Canvas><Drawing /></Canvas>
        </Workspace>
      </Main>

      <SelOverlay>
        <SelFrame>
          <L>第3层</L>
          <EllipsisBtn>•••</EllipsisBtn>
        </SelFrame>
        <SelDot />
      </SelOverlay>

      <Dialog>
        <DialogTitle>对应楼层<Close c="#000" s={13} /></DialogTitle>
        <DialogTree>
          <DRow>
            <Chev d="d" c="#444" /><DotDash /><Chk /><Open /><DLabel $ml={5}>所有楼层</DLabel>
          </DRow>
          {["基础层", "首层", "第2层", "第3层"].map((t, i) => (
            <DRow key={t} $child $last={i === 3}>
              <Chk /><Sp $w={2} /><FolderIcon /><DLabel $ml={7}><L>{t}</L></DLabel>
            </DRow>
          ))}
        </DialogTree>
        <DialogBtns>
          <DialogBtn $on>确定</DialogBtn>
          <DialogBtn>取消</DialogBtn>
        </DialogBtns>
      </Dialog>
    </Page>
  );
}
